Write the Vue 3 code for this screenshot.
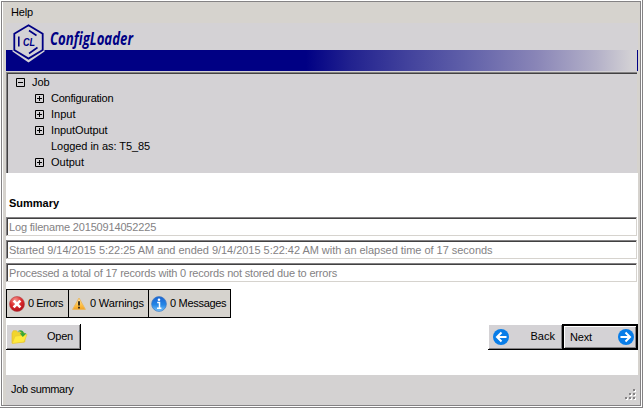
<script setup>
const nodes = [
  { label: 'Configuration', expandable: true, cls: 't-conf' },
  { label: 'Input', expandable: true, cls: 't-input' },
  { label: 'InputOutput', expandable: true, cls: 't-io' },
  { label: 'Logged in as: T5_85', expandable: false, cls: 't-login' },
  { label: 'Output', expandable: true, cls: 't-out' },
]
const summary = [
  { text: 'Log filename 20150914052225', cls: 's-log' },
  { text: 'Started 9/14/2015 5:22:25 AM and ended 9/14/2015 5:22:42 AM with an elapsed time of 17 seconds', cls: 's-time' },
  { text: 'Processed a total of 17 records with 0 records not stored due to errors', cls: 's-count' },
]
</script>

<template>
  <div class="window">
    <div class="content">
      <nav class="menu"><span class="t-help">Help</span></nav>
      <header class="banner">
        <div class="band"></div>
        <svg class="logo" width="34" height="41" viewBox="0 0 34 41">
          <path d="M16.5 0L32.5 9.5V28.5L16.5 39.5L.5 28.5V9.5Z" fill="#d4d2d5" />
          <path d="M16.5 2.2L30.7 10.8V27L16.5 35.6L2.3 27V10.8Z" fill="none" stroke="#000084" stroke-width="1.8" />
          <path d="M17 7.5L24.5 12.5M25.5 24.5L17 30.5M6.8 13.5V23.5" fill="none" stroke="#000084" stroke-width="1.6" />
          <text x="11" y="23" textLength="12" lengthAdjust="spacingAndGlyphs">CL</text>
        </svg>
        <svg class="brand" width="120" height="40" viewBox="0 0 120 40">
          <text x="1" y="22" textLength="83" lengthAdjust="spacingAndGlyphs">ConfigLoader</text>
        </svg>
      </header>
      <section class="tree">
        <div class="node root">
          <svg class="box" width="9" height="9"><path d="M.5 .5h8v8h-8zM2 4.5h5" /></svg>
          <span class="t-job">Job</span>
        </div>
        <div v-for="n in nodes" :key="n.label" class="node">
          <svg class="box" width="9" height="9"><path v-if="n.expandable" d="M.5 .5h8v8h-8zM2 4.5h5M4.5 2v5" /></svg>
          <span :class="n.cls">{{ n.label }}</span>
        </div>
      </section>
      <main class="main">
        <h1>Summary</h1>
        <div v-for="s in summary" :key="s.cls" class="field"><span :class="s.cls">{{ s.text }}</span></div>
        <div class="counts">
          <div class="count errors">
            <svg width="16" height="16" viewBox="0 0 16 16">
              <defs><radialGradient id="red" cx=".4" cy=".25" r=".8"><stop offset="0" stop-color="#f59a92" /><stop offset=".5" stop-color="#dd2a2c" /><stop offset="1" stop-color="#a80d18" /></radialGradient></defs>
              <circle cx="8" cy="8" r="7.5" fill="url(#red)" stroke="#b5484c" stroke-width=".6" />
              <path d="M4.6 4.6l6.8 6.8M11.4 4.6l-6.8 6.8" stroke="#fff" stroke-width="2.7" />
            </svg>
            <span class="t-err">0 Errors</span>
          </div>
          <div class="count warnings">
            <svg width="16" height="16" viewBox="0 0 16 16">
              <defs><linearGradient id="amber" x2="0" y2="1"><stop offset="0" stop-color="#ffe9b0" /><stop offset=".6" stop-color="#ffc247" /><stop offset="1" stop-color="#f5a31f" /></linearGradient></defs>
              <path d="M8 2L14.4 13.4H1.6Z" fill="url(#amber)" stroke="#e9b65c" stroke-width=".9" stroke-linejoin="round" />
              <path d="M8 5.3v4.2M8 10.8v1.6" stroke="#2c2418" stroke-width="1.8" />
            </svg>
            <span class="t-warn">0 Warnings</span>
          </div>
          <div class="count messages">
            <svg width="16" height="16" viewBox="0 0 16 16">
              <defs><linearGradient id="blue" x2="0" y2="1"><stop offset="0" stop-color="#1a63d2" /><stop offset=".55" stop-color="#2386e6" /><stop offset="1" stop-color="#7cc5fb" /></linearGradient></defs>
              <circle cx="8" cy="8" r="7.4" fill="url(#blue)" stroke="#3f78c0" stroke-width=".7" />
              <path d="M6.2 6.6h2.3v5M6 12.2h4.4" fill="none" stroke="#fff" stroke-width="1.5" /><circle cx="8" cy="3.7" r="1.3" fill="#fff" />
            </svg>
            <span class="t-msg">0 Messages</span>
          </div>
        </div>
        <div class="actions">
          <button class="btn open">
            <svg width="17" height="16" viewBox="0 0 17 16">
              <path d="M1 14V4l1.3-2.3h3.2l1.3 1.8H13l.8 1.5V13Z" fill="#f1d52c" stroke="#e5bd32" stroke-width=".7" />
              <path d="M1.2 14.5L4 7.2L16 5.5L13 13Z" fill="#ffea3d" stroke="#e7c739" stroke-width=".7" />
              <path d="M6.5 2.5C9 .3 12.4 1 12.9 4.2H15.5L11.8 8L8.7 4.2H10.7C10.2 2.7 8.7 2.1 6.5 2.5Z" fill="#38a838" />
            </svg>
            <span class="t-open">Open</span>
          </button>
          <div class="nav">
            <button class="btn back">
              <svg width="16" height="16" viewBox="0 0 16 16"><circle cx="8" cy="8" r="8" fill="#087de8" /><path d="M8.5 3.5L4 8l4.5 4.5M4 8h9.5" fill="none" stroke="#fff" stroke-width="2" /></svg>
              <span class="t-back">Back</span>
            </button>
            <button class="btn next">
              <span class="t-next">Next</span>
              <svg width="16" height="16" viewBox="0 0 16 16"><circle cx="8" cy="8" r="8" fill="#087de8" /><path d="M7.5 3.5L12 8l-4.5 4.5M12 8H2.5" fill="none" stroke="#fff" stroke-width="2" /></svg>
            </button>
          </div>
        </div>
      </main>
      <footer class="status">
        <span class="t-status">Job summary</span>
        <svg class="grip" width="12" height="12"><path d="M9 1h2v2H9zM5 5h2v2H5zM9 5h2v2H9zM1 9h2v2H1zM5 9h2v2H5zM9 9h2v2H9z" fill="#fff" /><path d="M8 0h2v2H8zM4 4h2v2H4zM8 4h2v2H8zM0 8h2v2H0zM4 8h2v2H4zM8 8h2v2H8z" fill="#848284" /></svg>
      </footer>
    </div>
  </div>
</template>

<style>
body { margin: 0; background: #fff; overflow: hidden; }
</style>

<style scoped>
* { box-sizing: border-box; }
.window {
  width: 643px; height: 408px; padding: 1px; background: #fff;
  border-right: 1px solid #848284; border-bottom: 1px solid #848284;
  font: 11px/13px "Liberation Sans", Arial, sans-serif; color: #000;
}
.content {
  width: 640px; height: 405px; display: flex; flex-direction: column;
  border: 1px solid #848284; background: #d6d3ce; padding: 0 2px 0 4px;
  box-shadow: inset 1px 0 #fff;
}
span { white-space: nowrap; }
.t-help { letter-spacing: -.2px; }
.t-conf { letter-spacing: -.24px; }
.t-io { letter-spacing: -.1px; }
.t-login { letter-spacing: -.05px; }
.s-log { letter-spacing: -.17px; }
.s-time { letter-spacing: -.035px; }
.s-count { letter-spacing: -.185px; }
.t-err { letter-spacing: -.52px; }
.t-warn { letter-spacing: -.15px; }
.t-msg { letter-spacing: -.3px; }
.t-open { letter-spacing: -.2px; }
.t-next { letter-spacing: -.2px; }
.t-status { letter-spacing: -.33px; }
.menu { height: 21px; flex: none; padding: 4px 0 0 5px; }
.banner { height: 49px; flex: none; display: grid; grid-template-rows: 49px; background: #d4d2d5; }
.band {
  grid-area: 1 / 1; margin-top: 27px; height: 21px; border-right: 1px solid #000084;
  background: linear-gradient(90deg, #000084 0 300px, #22228f 345px, #41419c 400px, #6060a9 460px, #8985b7 530px, #b3b0c8 590px, #d4d2d5 627px);
}
.logo { grid-area: 1 / 1; margin-left: 6px; z-index: 1; }
.logo text { font: italic bold 11px "Liberation Sans", sans-serif; fill: #000084; }
.brand { grid-area: 1 / 1; margin-left: 43px; overflow: visible; }
.brand text { font: italic bold 17.5px "Open Sans", sans-serif; fill: #000084; }
.tree {
  height: 101px; flex: none; margin-right: 1px; padding: 1px 0 0 8px; background: #d4d2d5;
  border-top: 1px solid #848284; border-left: 1px solid #848284;
  box-shadow: inset 1px 1px #424142;
}
.node { height: 16px; display: flex; align-items: center; gap: 7px; padding-left: 20px; }
.node.root { padding-left: 1px; }
.box path { fill: none; stroke: #000; stroke-width: 1; }
.main { background: #fff; height: 202px; flex: none; padding-top: 24px; }
h1 { font: bold 11px/13px "Liberation Sans", sans-serif; margin: 0 0 7px; padding-left: 3px; }
.field {
  height: 19px; width: 631px; margin-bottom: 4px; padding: 3px 0 0 2px; color: #848284;
  border: 1px solid #d6d3ce; border-top-color: #848284; border-left-color: #848284;
  box-shadow: inset 1px 1px #424142; line-height: 13px;
}
.counts { display: flex; margin-top: 7px; height: 29px; }
.count {
  display: flex; align-items: center; border: 1px solid #000; background: #d6d3ce;
  padding-left: 2px; gap: 3px; margin-right: -1px;
}
.errors { width: 63px; }
.warnings { width: 81px; }
.messages { width: 83px; }
.actions { display: flex; justify-content: space-between; margin-top: 6px; }
.btn {
  display: flex; align-items: center; margin: 0; height: 26px; width: 75px; font: inherit; color: #000;
  background: #d4d2d5; border: 0; border-right: 1px solid #000; border-bottom: 1px solid #000; border-radius: 0;
  box-shadow: inset 1px 1px #fff, inset -1px -1px #848284;
  justify-content: space-between; padding: 0 7px 0 5px;
}
.nav { display: flex; }
.back { width: 74px; border-right: 0; }
.next { width: 76px; border: 2px solid #000; padding: 0 2px 0 6px; }
.status {
  height: 30px; flex: none; display: flex; justify-content: space-between;
  background: #d4d2d2; padding: 8px 2px 0 5px; margin-right: -2px;
}
.grip { margin-top: 6px; margin-right: 1px; }
</style>
